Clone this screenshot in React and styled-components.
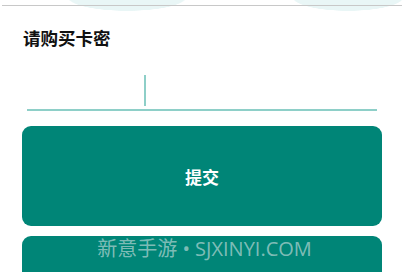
import React from "react";
import styled, { createGlobalStyle } from "styled-components";

const Global = createGlobalStyle`
  html, body { margin: 0; padding: 0; background: #fff; }
  body { font-family: "Noto Sans CJK SC", "Noto Sans", sans-serif; }
`;

const Page = styled.div`
  position: relative;
  width: 409px;
  height: 272px;
  overflow: hidden;
  background: #fff;
`;

const Header = styled.div`
  height: 12px;
  background:
    radial-gradient(ellipse 60px 14px at 127px -3px, #e9f6f6 97%, transparent 100%),
    radial-gradient(ellipse 56px 14px at 348px -3px, #e9f6f6 97%, transparent 100%);
  display: flex;
  flex-direction: column;
  padding: 5px 7px 0 2px;
  box-sizing: border-box;
`;

const Rule = styled.div`
  height: 1px;
  background: #c8c8c8;
`;

const Body = styled.div`
  padding: 0 27px 0 22px;
  display: flex;
  flex-direction: column;
`;

const Title = styled.div`
  margin: 14px 0 0 1px;
  font-size: 17.5px;
  line-height: 24px;
  font-weight: 700;
  color: #111;
`;

const Field = styled.div`
  margin: 20px 5px 0 5px;
  height: 39px;
  border-bottom: 2px solid #8ecfc8;
  display: flex;
  align-items: flex-end;
`;

const Caret = styled.span`
  width: 2px;
  height: 31px;
  margin: 0 0 3px 117px;
  background: #8ecfc8;
`;

const Button = styled.button`
  margin-top: ${(p) => p.$top}px;
  height: 100px;
  border: none;
  border-radius: 9px;
  background: #008577;
  color: #fff;
  font-family: "Noto Sans CJK SC", sans-serif;
  font-size: 17px;
  font-weight: 700;
  display: flex;
  align-items: center;
  justify-content: center;
  padding: 0;
`;

const Watermark = styled.div`
  position: absolute;
  left: 0;
  right: 0;
  top: 235px;
  text-align: center;
  font-family: "Open Sans", "Noto Sans CJK SC", sans-serif;
  font-size: 20px;
  line-height: 28px;
  font-weight: 400;
  color: rgba(210, 225, 225, 0.62);
`;

export default function App() {
  return (
    <Page>
      <Global />
      <Header>
        <Rule />
      </Header>
      <Body>
        <Title>请购买卡密</Title>
        <Field>
          <Caret />
        </Field>
        <Button $top={15}>提交</Button>
        <Button $top={10} />
      </Body>
      <Watermark>新意手游 • SJXINYI.COM</Watermark>
    </Page>
  );
}
